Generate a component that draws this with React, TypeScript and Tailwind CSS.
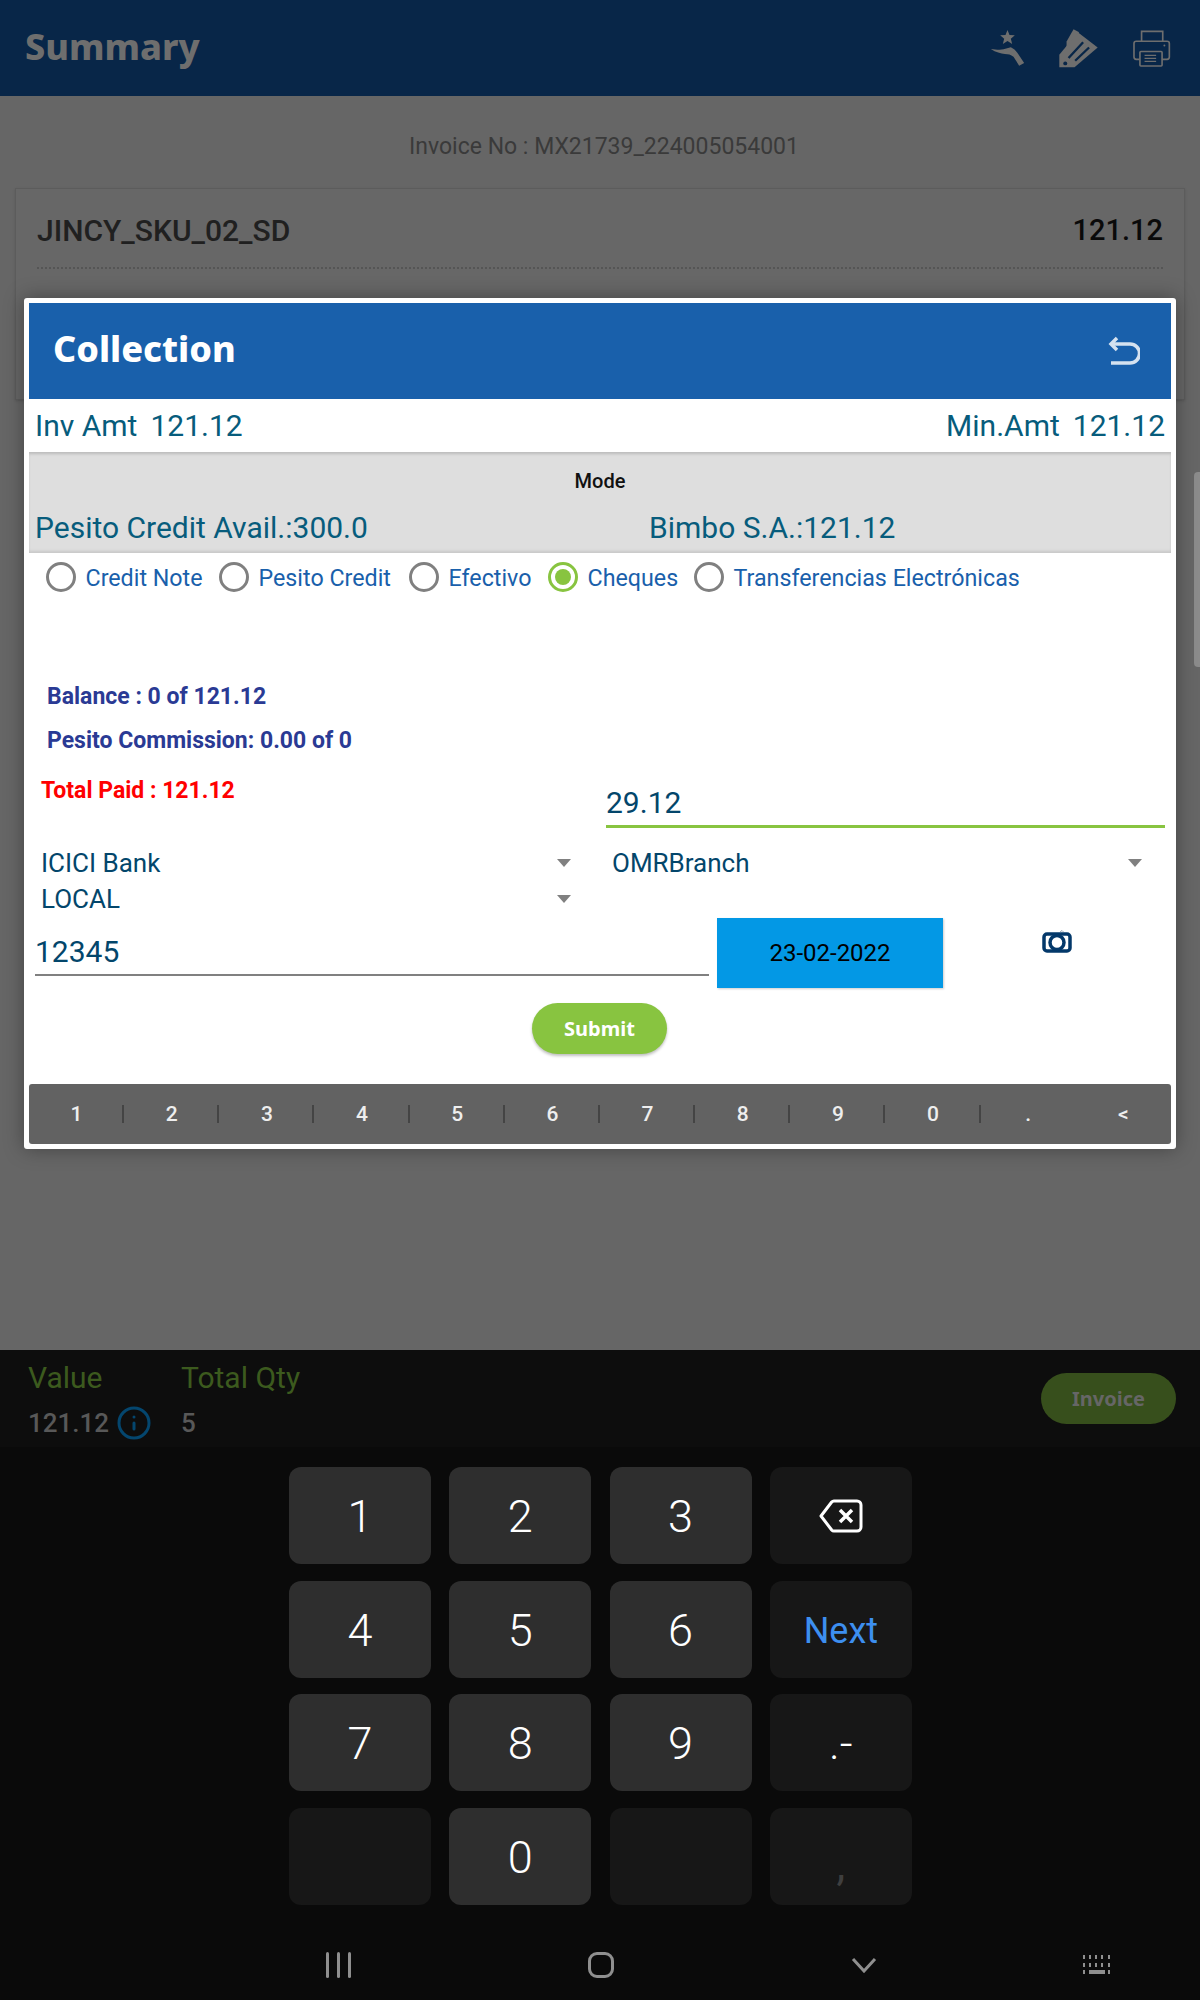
import React from "react";
import { Info } from "lucide-react";

const roboto = { fontFamily: "Roboto, sans-serif" };

const keypadBar = ["1", "2", "3", "4", "5", "6", "7", "8", "9", "0", ".", "<"];

const paymentModes = [
  { label: "Credit Note", width: "w-[173px]" },
  { label: "Pesito Credit", width: "w-[190px]" },
  { label: "Efectivo", width: "w-[139px]" },
  { label: "Cheques", width: "w-[146px]", selected: true },
  { label: "Transferencias Electrónicas", width: "" },
];

type KeyDef = { label?: string; dark?: boolean; kind?: "backspace" | "next" | "comma" };

const keys: KeyDef[] = [
  { label: "1" },
  { label: "2" },
  { label: "3" },
  { kind: "backspace", dark: true },
  { label: "4" },
  { label: "5" },
  { label: "6" },
  { kind: "next", dark: true },
  { label: "7" },
  { label: "8" },
  { label: "9" },
  { label: ".-", dark: true },
  { dark: true },
  { label: "0" },
  { dark: true },
  { kind: "comma", dark: true },
];

function Caret() {
  return <span className="w-0 h-0 border-x-[7.5px] border-x-transparent border-t-[8px] border-t-[#808080]" />;
}

function HeaderIcons() {
  return (
    <div className="flex items-center">
      {/* hand with star */}
      <svg width="37" height="40" viewBox="60 40 110 120" fill="#6e6e6e" className="mr-[30px]">
        <path d="M115 46l6 15 16 1-12 10 4 16-14-9-14 9 4-16-12-10 16-1z" />
        <path d="M65 103c14 1 25 4 38 1l22-6c9 4 16 11 22 20l18 27-15 8-17-27c-8-6-16-8-26-8-12-1-27-5-42-15z" />
      </svg>
      {/* tag */}
      <svg width="43" height="42" viewBox="260 35 130 125" fill="#6e6e6e" className="mr-[32px]">
        <path d="M292 78l21-37 17 9-38 45z" />
        <path d="M270 118l56-68 60 46-70 60h-46z" />
        <path d="M298 128l44-48M318 136l42-40" stroke="#082648" strokeWidth="7" fill="none" />
        <circle cx="288" cy="144" r="6" fill="#082648" />
      </svg>
      {/* printer */}
      <svg width="41" height="39" viewBox="485 40 122 118" fill="none" stroke="#6e6e6e" strokeWidth="5">
        <path d="M516 77V47h64v30" />
        <path d="M510 132h-10a7 7 0 0 1-7-7V84a7 7 0 0 1 7-7h93a7 7 0 0 1 7 7v41a7 7 0 0 1-7 7h-15" />
        <rect x="511" y="108" width="67" height="44" rx="3" />
        <path d="M525 120h35M525 129h35M525 138h35" strokeWidth="3.500" />
        <circle cx="585" cy="90" r="3" fill="#6e6e6e" stroke="none" />
      </svg>
    </div>
  );
}

export default function App() {
  return (
    <div className="relative w-[1200px] h-[2000px] overflow-hidden bg-[#666666]" style={roboto}>
      {/* page behind the dialog */}
      <header className="h-24 bg-[#082648] flex items-center justify-between pl-[25px] pr-[28px]">
        <span className="-mt-[3px] text-[36px] font-extrabold text-[#6e6e6e] [font-family:'Noto_Sans',sans-serif] leading-none">Summary</span>
        <HeaderIcons />
      </header>

      <main className="h-[1254px] px-[15px]">
        <div className="h-[92px] pt-[38px] pl-[8px] text-center text-[23px] leading-[26px] text-[#3a3a3a]">
          Invoice No : MX21739_224005054001
        </div>
        <div className="h-[212px] border border-[#5c5c5c] bg-[#676767] px-[21px] shadow-sm">
          <div className="flex justify-between items-center h-[78px] pt-[5px] text-[30px] font-medium">
            <span className="text-[#202020]">JINCY_SKU_02_SD</span>
            <span className="text-[29px] text-[#0a0a0a]">121.12</span>
          </div>
          <div className="border-t-2 border-dotted border-[#555555]" />
        </div>
      </main>

      <section className="h-[97px] bg-[#0d0d0d] flex items-start pl-[28px] pr-[24px]">
        <div className="w-[153px] pt-[10px]">
          <div className="text-[30px] leading-[36px] text-[#3c5a1e]">Value</div>
          <div className="flex items-center mt-[12px] h-[30px]">
            <span className="text-[26px] font-medium text-[#585858]">121.12</span>
            <Info className="ml-[7px] w-[36px] h-[36px] text-[#04466e]" strokeWidth={2} />
          </div>
        </div>
        <div className="flex-1 pt-[10px]">
          <div className="text-[30px] leading-[36px] text-[#3c5a1e]">Total Qty</div>
          <div className="mt-[12px] h-[30px] flex items-center text-[26px] font-medium text-[#585858]">5</div>
        </div>
        <button className="mt-[23px] w-[135px] h-[51px] rounded-full bg-[#374f1c] text-[20px] font-bold text-[#666666] [font-family:'Noto_Sans',sans-serif]">
          Invoice
        </button>
      </section>

      <section className="h-[553px] bg-[#0a0a0a]">
        <div className="pt-[20px] pl-[289px] grid grid-cols-[repeat(4,142px)] gap-x-[18.300px] gap-y-[16.500px]">
          {keys.map((k, i) => (
            <div
              key={i}
              className={`h-[97px] rounded-[12px] flex items-center justify-center text-white text-[45px] font-light ${
                k.dark ? "bg-[#171717]" : "bg-[#2e2e2e]"
              }`}
            >
              {k.label && <span className="pt-[3px]">{k.label}</span>}
              {k.kind === "backspace" && (
                <svg width="44" height="34" viewBox="0 0 44 34" fill="none" stroke="white" strokeWidth="3">
                  <path d="M15 2h23a4 4 0 0 1 4 4v22a4 4 0 0 1-4 4H15a3 3 0 0 1-2.300-1L2 17 12.700 3a3 3 0 0 1 2.300-1z" strokeLinejoin="round" />
                  <path d="M21 11l12 12M33 11L21 23" strokeWidth="3.500" />
                </svg>
              )}
              {k.kind === "next" && <span className="pt-[3px] text-[36px] font-normal text-[#3d8ff0]">Next</span>}
              {k.kind === "comma" && <span className="text-[44px] font-normal mt-[18px] text-[#3f3f3f]">,</span>}
            </div>
          ))}
        </div>
        <nav className="relative mt-[47px] h-[26px]">
          <div className="absolute left-[326px] top-0 flex gap-[8px]">
            <span className="w-[3px] h-[26px] bg-[#8f8f8f] rounded" />
            <span className="w-[3px] h-[26px] bg-[#8f8f8f] rounded" />
            <span className="w-[3px] h-[26px] bg-[#8f8f8f] rounded" />
          </div>
          <span className="absolute left-[588px] top-0 w-[26px] h-[26px] rounded-[9px] border-[3px] border-[#8f8f8f]" />
          <svg width="26" height="16" viewBox="0 0 26 16" fill="none" stroke="#8f8f8f" strokeWidth="3" className="absolute left-[851px] top-[5px]">
            <path d="M2 2l11 12L24 2" />
          </svg>
          <svg width="30" height="20" viewBox="0 0 30 20" fill="#8f8f8f" className="absolute left-[1082px] top-[3px]">
            <path d="M1 0h2v4H1zM7 0h2v4H7zM13 0h2v4h-2zM19 0h2v4h-2zM26 0h2v4h-2zM1 8h2v4H1zM7 8h2v4H7zM13 8h2v4h-2zM19 8h2v4h-2zM26 8h2v4h-2zM1 15h2v4H1zM7 15h16v4H7zM26 15h2v4h-2z" />
          </svg>
        </nav>
      </section>

      {/* scroll thumb */}
      <div className="absolute right-0 top-[472px] w-[6px] h-[195px] rounded-l bg-[#8b8b8b]" />

      {/* Collection dialog */}
      <div className="absolute left-[24px] top-[298px] w-[1152px] h-[851px] bg-white rounded-[3px] p-[5px] shadow-[0_0_20px_rgba(0,0,0,0.35)]">
        <div className="h-24 bg-[#1960ab] flex items-center justify-between pl-[24px] pr-[31px]">
          <span className="-mt-[4px] text-[36px] font-extrabold text-white [font-family:'Noto_Sans',sans-serif]">Collection</span>
          <svg width="32" height="32" viewBox="0 0 32 32" fill="none" stroke="#d5e2f0" strokeWidth="3.500">
            <path d="M3 9h19a9.500 9.500 0 0 1 0 19H3" />
            <path d="M9 3L3 9l6 6" />
          </svg>
        </div>

        <div className="h-[53px] flex items-center justify-between px-[6px] text-[30px] text-[#075c7c]">
          <span>Inv Amt<span className="ml-[13px]">121.12</span></span>
          <span>Min.Amt<span className="ml-[13px]">121.12</span></span>
        </div>

        <div className="h-[101px] bg-[#dedede] shadow-[inset_0_3px_3px_-1px_#bbbbbb,inset_0_-3px_3px_-1px_#c8c8c8]">
          <div className="pt-[19px] text-center text-[20px] leading-[20px] font-medium text-[#111111]">Mode</div>
          <div className="flex pt-[19px] text-[30px] leading-[36px] text-[#075c7c]">
            <span className="w-[620px] pl-[6px]">Pesito Credit Avail.:300.0</span>
            <span>Bimbo S.A.:121.12</span>
          </div>
        </div>

        <div className="flex items-center h-[48px] pl-[17px]">
          {paymentModes.map((m) => (
            <div key={m.label} className={`flex items-center ${m.width}`}>
              <span
                className={`w-[30px] h-[30px] rounded-full border-[3px] flex items-center justify-center ${
                  m.selected ? "border-[#88c440]" : "border-[#808080]"
                }`}
              >
                {m.selected && <span className="w-[16px] h-[16px] rounded-full bg-[#88c440]" />}
              </span>
              <span className="ml-[9.500px] pt-[3px] text-[23.250px] text-[#1960ab]">{m.label}</span>
            </div>
          ))}
        </div>

        <div className="pl-[18px] pt-[82px] text-[23px] font-bold text-[#2a3a94] leading-[28px]">Balance : 0 of 121.12</div>
        <div className="pl-[18px] pt-[16px] text-[23px] font-bold text-[#2a3a94] leading-[28px]">Pesito Commission: 0.00 of 0</div>

        <div className="flex pt-[22px]">
          <div className="w-[577px] pl-[12px] text-[23px] font-bold text-[#ff0000] leading-[28px]">Total Paid : 121.12</div>
          <div className="flex-1 mr-[6px] h-[51px] border-b-[3px] border-[#88c440] pt-[6px] text-[30px] leading-[40px] text-[#03466b]">29.12</div>
        </div>

        <div className="flex pt-[17px] text-[26px] leading-[36px] text-[#03466b]">
          <div className="w-[577px] pl-[12px] pr-[35px]">
            <div className="flex items-center justify-between"><span>ICICI Bank</span><Caret /></div>
            <div className="flex items-center justify-between"><span>LOCAL</span><Caret /></div>
          </div>
          <div className="flex-1 pl-[6px] pr-[29px] flex items-start justify-between">
            <span>OMRBranch</span>
            <span className="mt-[14px] flex"><Caret /></span>
          </div>
        </div>

        <div className="flex mt-[1px] items-start">
          <div className="w-[674px] ml-[6px] h-[58px] border-b-2 border-[#808080] text-[30px] leading-[68px] text-[#03466b]">12345</div>
          <div className="ml-[8px] w-[226px] h-[70px] bg-[#0398e5] flex items-center justify-center text-[24px] text-black shadow-[1px_1px_2px_rgba(0,0,0,0.2)]">
            23-02-2022
          </div>
          <svg width="30" height="24" viewBox="0 0 30 24" fill="none" stroke="#03386a" className="ml-[99px] mt-[11px]">
            <rect x="2" y="5" width="26" height="17" rx="3" strokeWidth="3.500" />
            <circle cx="15" cy="13.500" r="7" strokeWidth="3.500" />
            <path d="M18 3l2-1.500 1.500 1.500" stroke="#9aa7b5" strokeWidth="1" />
          </svg>
        </div>

        <div className="flex justify-center pt-[15px]">
          <button className="w-[135px] h-[51px] -ml-[1px] rounded-full bg-[#88c440] text-[20px] font-bold text-white shadow-[0_2px_3px_rgba(0,0,0,0.25)] [font-family:'Noto_Sans',sans-serif]">
            Submit
          </button>
        </div>

        <div className="mt-[30px] h-[60px] rounded-[3px] bg-[#626262] grid grid-cols-12 items-center">
          {keypadBar.map((k, i) => (
            <div key={k} className="relative h-full flex items-center justify-center pt-[2px] text-[21px] font-medium text-[#eeeeee]">
              {k}
              {i < 10 && <span className="absolute right-0 top-[21px] w-[2px] h-[18px] bg-[#444444]" />}
            </div>
          ))}
        </div>
      </div>
    </div>
  );
}
